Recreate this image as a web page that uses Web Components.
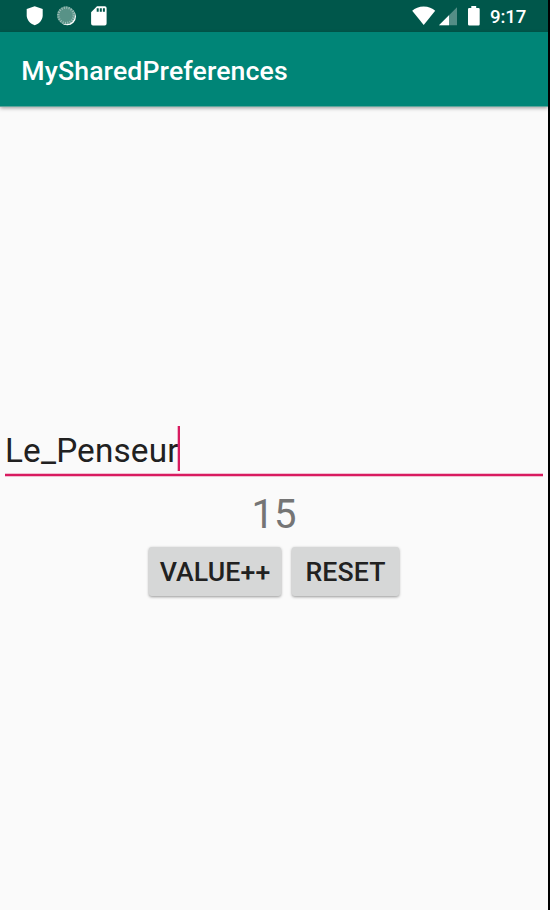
<!DOCTYPE html>
<html lang="en">
<head>
<meta charset="utf-8">
<title>MySharedPreferences</title>
<style>
    body {
        margin: 0;
        background-color: #000;
        font-family: Roboto, "Liberation Sans", sans-serif;
    }
</style>
</head>
<body>
<phone-screen>
    <status-bar time="9:17"></status-bar>
    <app-bar>MySharedPreferences</app-bar>
    <name-field>Le_Penseur</name-field>
    <value-counter>15</value-counter>
    <button-row>
        <raised-button>VALUE++</raised-button>
        <raised-button class="reset">RESET</raised-button>
    </button-row>
</phone-screen>

<script>
    //Attach an open shadow root and fill it from a template
    function render(element, html) {
        const template = document.createElement("template");
        template.innerHTML = html;
        element.attachShadow({ mode: "open" });
        element.shadowRoot.appendChild(template.content.cloneNode(true));
    }

    class PhoneScreen extends HTMLElement {
        constructor() {
            super();
            render(this, `
                <style>
                    :host {
                        display: flex;
                        flex-direction: column;
                        width: 548px;
                        height: 910px;
                        overflow: hidden;
                        background-color: #fafafa;
                    }
                </style>
                <slot></slot>
            `);
        }
    }

    class StatusBar extends HTMLElement {
        constructor() {
            super();
            render(this, `
                <style>
                    :host {
                        display: flex;
                        justify-content: space-between;
                        flex: none;
                        height: 32px;
                        background-color: #00574b;
                        color: #fff;
                    }
                    svg { display: block; }
                    .system { display: flex; }
                    .time {
                        width: 58px;
                        font-size: 18.67px;
                        font-weight: 500;
                        letter-spacing: -0.1px;
                        line-height: 34px;
                    }
                </style>
                <svg width="120" height="32" viewBox="0 0 120 32">
                    <path fill="#fff" d="M34.7 6.2 42.7 9v6.3c0 4.6-3.4 8.5-8 10-4.6-1.5-8-5.4-8-10V9z"/>
                    <circle cx="67.3" cy="16.6" r="8.7" fill="#fff"/>
                    <circle cx="66" cy="15.3" r="9" fill="#589287"/>
                    <circle cx="66" cy="15.3" r="7.7" fill="none" stroke="#a0c0ba" stroke-width="2.2" stroke-dasharray="1 1.42"/>
                    <path fill="#fff" d="M97 6.3h7.8a1.8 1.8 0 0 1 1.8 1.8v15.4a1.9 1.9 0 0 1-1.9 1.9H93a1.9 1.9 0 0 1-1.9-1.9V12.2z"/>
                    <path fill="#00574b" d="M96.7 8.3h2v3.5h-2zM99.8 8.3h2v3.5h-2zM102.9 8.3h2v3.5h-2z"/>
                </svg>
                <div class="system">
                    <svg width="80" height="32" viewBox="410 0 80 32">
                        <path fill="#fff" d="M423.7 25 412.2 10.7C415 8.2 419 6.5 423.7 6.5s8.7 1.7 11.5 4.2z"/>
                        <path fill="#fff" fill-opacity=".33" d="M457 7.3V25.2H439z"/>
                        <path fill="#fff" d="M449 15.2v10h-10z"/>
                        <path fill="#fff" d="M471.3 6h4.9v2h2.3q1.2 0 1.2 1.2v15q0 1.2-1.2 1.2h-9.3q-1.2 0-1.2-1.2v-15q0-1.2 1.2-1.2h2.1z"/>
                    </svg>
                    <div class="time"></div>
                </div>
            `);
        }

        connectedCallback() {
            this.shadowRoot.querySelector(".time").textContent = this.getAttribute("time");
        }
    }

    class AppBar extends HTMLElement {
        constructor() {
            super();
            render(this, `
                <style>
                    :host {
                        display: flex;
                        align-items: center;
                        flex: none;
                        box-sizing: border-box;
                        height: 74px;
                        padding: 3px 21.33px 0;
                        background-color: #008577;
                        box-shadow: 0 1px #5fa59c, 0 2px 4px rgba(0, 0, 0, 0.4);
                        color: #fff;
                        font-size: 26.67px;
                        font-weight: 500;
                        letter-spacing: 0.12px;
                    }
                </style>
                <slot></slot>
            `);
        }
    }

    class NameField extends HTMLElement {
        constructor() {
            super();
            render(this, `
                <style>
                    :host {
                        display: flex;
                        flex: none;
                        height: 48px;
                        margin: 320px 5px 0;
                        border-bottom: 2px solid #d81b60;
                        box-shadow: 0 1px #f2bfd1, inset 0 -1px #f2bfd1;
                        color: #212121;
                        font-size: 33.33px;
                        letter-spacing: 0.16px;
                        line-height: 49px;
                    }
                    .cursor {
                        width: 2px;
                        height: 45px;
                        margin-left: -0.8px;
                        background-color: #d81b60;
                        box-shadow: -1px 0 rgba(216, 27, 96, 0.3);
                    }
                </style>
                <slot></slot>
                <div class="cursor"></div>
            `);
        }
    }

    class ValueCounter extends HTMLElement {
        constructor() {
            super();
            render(this, `
                <style>
                    :host {
                        display: block;
                        flex: none;
                        height: 53px;
                        margin-top: 11px;
                        color: #757575;
                        font-size: 40px;
                        line-height: 55px;
                        text-align: center;
                    }
                </style>
                <slot></slot>
            `);
        }
    }

    class ButtonRow extends HTMLElement {
        constructor() {
            super();
            render(this, `
                <style>
                    :host {
                        display: flex;
                        justify-content: center;
                        gap: 11px;
                        margin-top: 7px;
                    }
                    ::slotted(.reset) { width: 107px; }
                </style>
                <slot></slot>
            `);
        }
    }

    class RaisedButton extends HTMLElement {
        constructor() {
            super();
            render(this, `
                <style>
                    :host {
                        display: block;
                        width: 132px;
                        height: 49px;
                    }
                    button {
                        width: 100%;
                        height: 100%;
                        padding: 1px 0 0;
                        border: 0;
                        border-radius: 2.67px;
                        background-color: #d6d7d7;
                        box-shadow: 0 1px 3px rgba(0, 0, 0, 0.4);
                        color: #212121;
                        font: 500 26.67px Roboto, "Liberation Sans", sans-serif;
                        letter-spacing: 0.13px;
                        white-space: nowrap;
                    }
                </style>
                <button type="button"><slot></slot></button>
            `);
        }
    }

    //Register the custom elements with the browser
    customElements.define("phone-screen", PhoneScreen);
    customElements.define("status-bar", StatusBar);
    customElements.define("app-bar", AppBar);
    customElements.define("name-field", NameField);
    customElements.define("value-counter", ValueCounter);
    customElements.define("button-row", ButtonRow);
    customElements.define("raised-button", RaisedButton);
</script>
</body>
</html>
